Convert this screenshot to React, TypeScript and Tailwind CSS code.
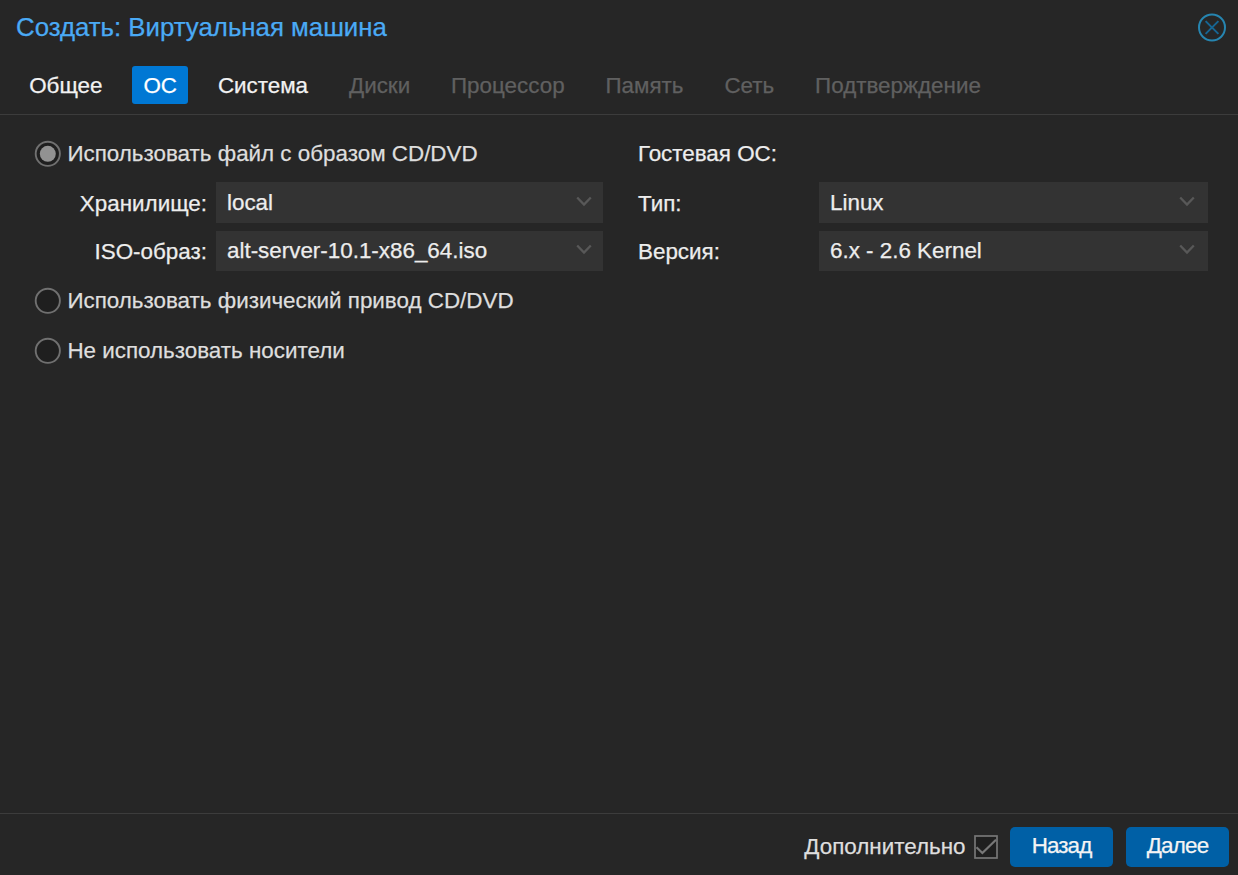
import React from "react";

const tabs = [
  { label: "Общее", state: "ready" },
  { label: "ОС", state: "active" },
  { label: "Система", state: "ready" },
  { label: "Диски", state: "disabled" },
  { label: "Процессор", state: "disabled" },
  { label: "Память", state: "disabled" },
  { label: "Сеть", state: "disabled" },
  { label: "Подтверждение", state: "disabled" },
];

const tabStyles: Record<string, string> = {
  ready: "text-[#f2f2f2]",
  active: "bg-[#0078d4] text-white",
  disabled: "text-[#606060]",
};

function Radio({ label, checked = false }: { label: string; checked?: boolean }) {
  return (
    <label className="flex h-[28px] items-center gap-[5.4px] text-[#dedede]">
      <svg width="28" height="28" viewBox="0 0 28 28" className="shrink-0">
        <circle cx="13.8" cy="13.8" r="12.1" fill="#1f1f1f" stroke="#707070" strokeWidth="1.9" />
        {checked && <circle cx="13.8" cy="13.8" r="8" fill="#929292" />}
      </svg>
      <span>{label}</span>
    </label>
  );
}

function Select({ value, className }: { value: string; className: string }) {
  return (
    <div className={`flex justify-between bg-[#333333] pl-[11px] text-[#ededed] ${className}`}>
      <span>{value}</span>
      <svg width="18" height="14" viewBox="0 0 18 14" fill="none" stroke="#585858" strokeWidth="2.3" className="mt-[5px]">
        <path d="M2.2 2.5 9 9.6 15.8 2.5" />
      </svg>
    </div>
  );
}

export default function App() {
  return (
    <div className="flex h-[875px] w-[1238px] flex-col overflow-hidden bg-[#262626] font-['Liberation_Sans',sans-serif] text-[22.4px] leading-[26px] whitespace-nowrap [-webkit-text-stroke:0.25px_currentColor]">
      <header className="flex h-[55px] items-center justify-between pr-[11px] pl-[16px]">
        <h1 className="pb-[2px] text-[25.8px] leading-[30px] text-[#4aaaf5]">Создать: Виртуальная машина</h1>
        <svg width="30" height="30" viewBox="0 0 30 30" fill="none">
          <circle cx="15" cy="14.5" r="13" stroke="#2685b0" strokeWidth="2" />
          <path d="M8.6 8.1 21.4 20.9M21.4 8.1 8.6 20.9" stroke="#176693" strokeWidth="2" />
        </svg>
      </header>

      <nav className="flex h-[60px] items-start gap-[18.9px] border-b border-[#3c3c3c] pt-[11px] pl-[18.2px]">
        {tabs.map((tab) => (
          <div key={tab.label} className={`flex h-[38px] items-center rounded-[3px] px-[11px] pt-[2px] ${tabStyles[tab.state]}`}>
            {tab.label}
          </div>
        ))}
      </nav>

      <main className="flex flex-1 items-start pt-[25px] pl-[34px]">
        <section className="w-[604px]">
          <Radio label="Использовать файл с образом CD/DVD" checked />
          <div className="mt-[14px] flex items-center text-[#ededed]">
            <span className="w-[173px] pt-[2px] text-right">Хранилище:</span>
            <Select value="local" className="ml-[9px] h-[41px] w-[387px] pt-[8px] pr-[10px]" />
          </div>
          <div className="mt-[8px] flex items-center text-[#ededed]">
            <span className="w-[173px] pt-[2px] text-right">ISO-образ:</span>
            <Select value="alt-server-10.1-x86_64.iso" className="ml-[9px] h-[40px] w-[387px] pt-[7px] pr-[10px]" />
          </div>
          <div className="mt-[16px]">
            <Radio label="Использовать физический привод CD/DVD" />
          </div>
          <div className="mt-[22px]">
            <Radio label="Не использовать носители" />
          </div>
        </section>
        <section className="text-[#ededed]">
          <div className="flex h-[28px] items-center">Гостевая ОС:</div>
          <div className="mt-[14px] flex items-center">
            <span className="w-[181px] pt-[2px]">Тип:</span>
            <Select value="Linux" className="h-[41px] w-[389px] pt-[8px] pr-[12px]" />
          </div>
          <div className="mt-[8px] flex items-center">
            <span className="w-[181px] pt-[2px]">Версия:</span>
            <Select value="6.x - 2.6 Kernel" className="h-[40px] w-[389px] pt-[7px] pr-[12px]" />
          </div>
        </section>
      </main>

      <footer className="flex h-[62px] items-start justify-end border-t border-[#3c3c3c] pt-[13px] pr-[9px]">
        <label className="flex h-[40px] items-center gap-[8.5px] text-[#dedede]">
          <span>Дополнительно</span>
          <svg width="24" height="24" viewBox="0 0 24 24" fill="none" stroke="#777777">
            <rect x="1" y="1" width="22" height="22" fill="#1f1f1f" strokeWidth="1.7" />
            <path d="M2.5 12.2 8.4 18 22 4.8" strokeWidth="2.2" />
          </svg>
        </label>
        <button className="ml-[12px] h-[40px] w-[103px] rounded-[5px] bg-[#0060a6] pb-[3px] tracking-[-0.9px] text-[#f4f4f4]">Назад</button>
        <button className="ml-[13px] h-[40px] w-[103px] rounded-[5px] bg-[#0060a6] pb-[3px] tracking-[-0.8px] text-[#f4f4f4]">Далее</button>
      </footer>
    </div>
  );
}
